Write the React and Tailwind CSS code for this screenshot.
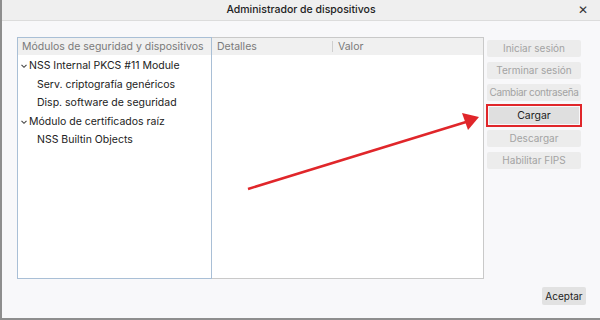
export default function App() {
  const font = { fontFamily: 'Inter, "Liberation Sans", Arial, sans-serif' };
  const tree = [
    { label: 'NSS Internal PKCS #11 Module', level: 0 },
    { label: 'Serv. criptografía genéricos', level: 1 },
    { label: 'Disp. software de seguridad', level: 1 },
    { label: 'Módulo de certificados raíz', level: 0 },
    { label: 'NSS Builtin Objects', level: 1 },
  ];
  const buttons = [
    { label: 'Iniciar sesión' },
    { label: 'Terminar sesión' },
    { label: 'Cambiar contraseña', tight: true },
    { label: 'Cargar', active: true },
    { label: 'Descargar' },
    { label: 'Habilitar FIPS' },
  ];

  return (
    <div className="relative h-[320px] w-[600px] overflow-hidden bg-[#f8f8fa]" style={font}>
      <div className="flex h-full flex-col border-b-2 border-l-2 border-[#8e8e8e]">
        {/* title bar */}
        <div className="relative flex h-[21px] items-center justify-center border-b border-[#dcdcdc] bg-[#efefef]">
          <span className="text-[10.5px] font-medium text-[#222]">Administrador de dispositivos</span>
          <span className="absolute right-[12px] top-[4px] text-[12px] leading-none text-[#333]">✕</span>
        </div>

        {/* body */}
        <div className="flex flex-1 flex-col pl-[15px] pr-[14px] pt-[16px]">
          <div className="flex">
            <div className="flex h-[242px] w-[195px] flex-col border border-[#a9bfd6] bg-white">
              <div className="flex h-[17px] items-center bg-[#f0f0f0] pl-[4px] text-[10.5px] text-[#7a7a7a]">
                Módulos de seguridad y dispositivos
              </div>
              <div className="flex flex-col pt-[2px]">
                {tree.map((r) => (
                  <div
                    key={r.label}
                    className={`flex h-[18.5px] items-center text-[10.5px] text-[#222] ${r.level ? 'pl-[19px]' : 'pl-[2px]'}`}
                  >
                    {!r.level && (
                      <svg width="8" height="8" viewBox="0 0 8 8" className="mr-[1px]">
                        <path d="M1.5 2.8 L4 5.3 L6.5 2.8" fill="none" stroke="#444" strokeWidth="1.1" />
                      </svg>
                    )}
                    {r.label}
                  </div>
                ))}
              </div>
            </div>

            <div className="flex h-[242px] w-[272px] flex-col border border-l-0 border-[#c9c9c9] bg-white">
              <div className="flex h-[17px] items-center bg-[#f0f0f0] text-[10.5px] text-[#7a7a7a]">
                <span className="w-[120px] pl-[5px]">Detalles</span>
                <span className="h-[11px] w-px bg-[#cfcfcf]" />
                <span className="pl-[5px]">Valor</span>
              </div>
            </div>

            <div className="ml-[3px] flex w-[94px] flex-col gap-[5px] pt-[3px]">
              {buttons.map((b) =>
                b.active ? (
                  <div key={b.label} className="-mx-[1px] -my-[2px] border-[2px] border-[#e0262a] p-[1px]">
                    <div className="flex h-[17px] items-center justify-center bg-[#dfdfdf] text-[10.5px] text-[#222]">
                      {b.label}
                    </div>
                  </div>
                ) : (
                  <div
                    key={b.label}
                    className={`flex h-[17px] items-center justify-center whitespace-nowrap rounded-[2px] bg-[#ececec] text-[10px] text-[#a3a3a3] ${b.tight ? 'tracking-[-0.35px]' : ''}`}
                  >
                    {b.label}
                  </div>
                )
              )}
            </div>
          </div>

          <div className="flex justify-end pt-[8px]">
            <div className="flex h-[18px] w-[44px] items-center justify-center rounded-[2px] bg-[#e2e2e2] text-[10px] text-[#222]">
              Aceptar
            </div>
          </div>
        </div>
      </div>

      {/* red annotation arrow */}
      <svg className="pointer-events-none absolute left-0 top-0" width="600" height="320">
        <line x1="248" y1="189" x2="466" y2="122" stroke="#e0262a" strokeWidth="2.5" />
        <polygon points="479,117 462,113 468,130" fill="#e0262a" />
      </svg>
    </div>
  );
}
